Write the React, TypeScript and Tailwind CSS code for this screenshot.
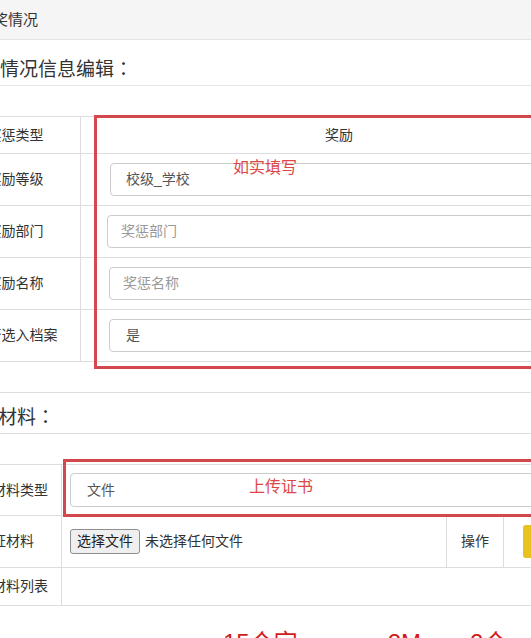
import React from "react";

const font = "font-['Liberation_Sans','Noto_Sans_CJK_SC',sans-serif]";
const jpColon = "font-['Noto_Sans_CJK_JP',sans-serif]";

const Field = ({
  text,
  placeholder,
  className = "",
}: {
  text?: string;
  placeholder?: string;
  className?: string;
}) => (
  <div
    className={`h-[33px] w-[480px] flex items-center border border-[#ccc] rounded-[4px] bg-white text-[14px] ${className}`}
  >
    {text ? (
      <span className="text-[#555]">{text}</span>
    ) : (
      <span className="text-[#999]">{placeholder}</span>
    )}
  </div>
);

const Row = ({
  label,
  labelClass,
  height,
  last,
  children,
}: {
  label: string;
  labelClass: string;
  height: string;
  last?: boolean;
  children: React.ReactNode;
}) => (
  <div
    className={`flex border-t border-[#ddd] ${last ? "border-b" : ""} ${height}`}
  >
    <div
      className={`${labelClass} shrink-0 border-r border-[#ddd] flex items-center text-[14px] text-[#333] whitespace-nowrap`}
    >
      {label}
    </div>
    <div className="flex-1 flex items-center min-w-0">{children}</div>
  </div>
);

const wide = "w-[130px] justify-center";
const narrow = "w-[83px] justify-start pl-[13px]";

export default function App() {
  return (
    <div
      className={`w-[531px] h-[638px] overflow-hidden bg-white text-[#333] ${font}`}
    >
      <div className="h-[40px] bg-[#f5f5f5] border-b border-[#e3e3e3] flex items-center">
        <span className="ml-[-22px] text-[15px] leading-[20px] whitespace-nowrap">
          获奖情况
        </span>
      </div>

      <div className="h-[46px] border-b border-[#e5e5e5] flex items-end pb-[3px]">
        <h3 className="ml-[-38px] text-[19px] leading-[24px] whitespace-nowrap">
          奖惩情况信息编辑<span className={jpColon}>：</span>
        </h3>
      </div>

      {/* 奖惩信息 */}
      <div className="relative mt-[30px] ml-[-49px] w-[646px]">
        <Row label="奖惩类型" labelClass={wide} height="h-[37px]">
          <span className="w-full text-center text-[14px] text-[#333]">奖励</span>
        </Row>
        <Row label="奖励等级" labelClass={wide} height="h-[52px]">
          <Field text="校级_学校" className="ml-[29px] pl-[15px]" />
        </Row>
        <Row label="奖励部门" labelClass={wide} height="h-[52px]">
          <Field placeholder="奖惩部门" className="ml-[26px] pl-[13px]" />
        </Row>
        <Row label="奖励名称" labelClass={wide} height="h-[52px]">
          <Field placeholder="奖惩名称" className="ml-[28px] pl-[13px]" />
        </Row>
        <Row label="是否选入档案" labelClass={wide} height="h-[53px]" last>
          <Field text="是" className="ml-[28px] pl-[16px]" />
        </Row>

        <div className="absolute left-[143px] top-[-1px] w-[600px] h-[254px] border-[3px] border-[#d4474c] pointer-events-none" />
        <span className="absolute left-[282px] top-[42px] text-[16px] leading-[20px] text-[#dc4848] whitespace-nowrap">
          如实填写
        </span>
      </div>

      <div className="mt-[30px] h-[42px] border-t border-b border-[#ddd] flex items-end pb-[3px]">
        <h3 className="ml-[-40px] text-[19px] leading-[24px] whitespace-nowrap">
          上传材料<span className={jpColon}>：</span>
        </h3>
      </div>

      {/* 材料 */}
      <div className="relative mt-[30px] ml-[-21px] w-[640px]">
        <Row label="材料类型" labelClass={narrow} height="h-[51px]">
          <Field text="文件" className="ml-[8px] h-[34px] pl-[16px] w-[520px]" />
        </Row>
        <Row label="证材料" labelClass={narrow} height="h-[52px]">
          <div className="flex-1 h-full flex items-center pl-[8px] border-r border-[#ddd]">
            <span className="h-[25px] px-[6px] flex items-center bg-[#efefef] border border-[#8f8f8f] rounded-[3px] text-[14px] text-[#222] whitespace-nowrap">
              选择文件
            </span>
            <span className="ml-[5px] text-[14px] text-[#333] whitespace-nowrap">
              未选择任何文件
            </span>
          </div>
          <div className="w-[57px] h-full shrink-0 border-r border-[#ddd] flex items-center justify-center text-[14px] text-[#333]">
            操作
          </div>
          <div className="w-[115px] h-full shrink-0 flex items-center pl-[19px]">
            <div className="w-[80px] h-[33px] bg-[#eac21e] rounded-[3px]" />
          </div>
        </Row>
        <Row label="材料列表" labelClass={narrow} height="h-[39px]" last>
          <span />
        </Row>

        <div className="absolute left-[84px] top-[-5px] w-[600px] h-[58px] border-[3px] border-[#d4474c] pointer-events-none" />
        <span className="absolute left-[270px] top-[13px] text-[16px] leading-[20px] text-[#dc4848] whitespace-nowrap">
          上传证书
        </span>
      </div>

      <div className="mt-[25px] flex text-[24px] leading-[24px] text-[#d01c1c] whitespace-nowrap">
        <span className="ml-[223px]">15个字</span>
        <span className="ml-[90px]">2M</span>
        <span className="ml-[49px]">2个</span>
      </div>
    </div>
  );
}
